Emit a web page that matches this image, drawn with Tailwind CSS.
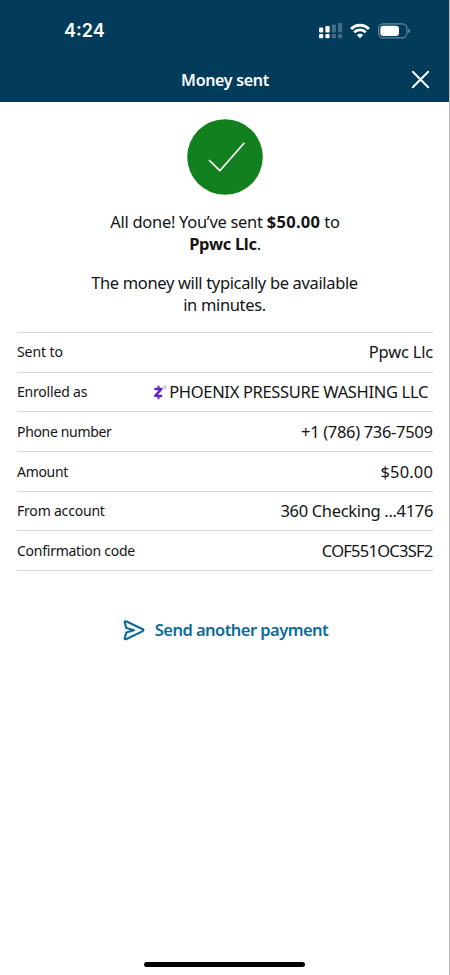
<!DOCTYPE html>
<html lang="en">
<head>
<meta charset="utf-8">
<title>Money sent</title>
<script src="https://cdn.jsdelivr.net/npm/@tailwindcss/browser@4"></script>
</head>
<body class="bg-white">
<div class="flex h-[975px] w-[450px] flex-col overflow-hidden border-r border-[#b4b7b9] bg-white font-['Noto_Sans',sans-serif] text-[#141414]">
  <header class="-mr-px h-[102px] shrink-0 bg-[#033c5a] text-white">
    <div class="flex h-[60px] items-center justify-between pt-[1px] pr-[39px] pl-[64px]">
      <span class="font-['Inter',sans-serif] text-[18px] font-semibold">4:24</span>
      <div class="flex items-center">
        <svg class="h-[16px] w-[24px]" viewBox="0 0 24 16" fill="#fff">
          <rect x="0" y="4.5" width="4.2" height="5" rx="1"/><rect x="0" y="11" width="4.2" height="4.2" rx="1"/>
          <rect x="6.4" y="3" width="4.2" height="6.5" rx="1"/><rect x="6.4" y="11" width="4.2" height="4.2" rx="1"/>
          <g opacity=".25"><rect x="12.8" y="1.5" width="4.2" height="8" rx="1"/><rect x="12.8" y="11" width="4.2" height="4.2" rx="1"/>
          <rect x="19" y="0" width="4.2" height="9.5" rx="1"/><rect x="19" y="11" width="4.2" height="4.2" rx="1"/></g>
        </svg>
        <svg class="ml-[7px] h-[16px] w-[20px]" viewBox="0 0 20 16" fill="none" stroke="#fff" stroke-width="2.9">
          <path d="M1 6C6 .9 14 .9 19 6"/><path d="M4.2 9.3c3.3-3.2 8.3-3.2 11.6 0"/>
          <path d="M10 15.2 6.8 12c1.8-1.6 4.6-1.6 6.4 0Z" fill="#fff" stroke="none"/>
        </svg>
        <svg class="ml-[8px] h-[16px] w-[33px]" viewBox="0 0 33 16">
          <rect x=".6" y=".9" width="28.3" height="14" rx="4.6" fill="none" stroke="#fff" stroke-opacity=".4" stroke-width="1.1"/>
          <rect x="2.3" y="2.7" width="18.7" height="10.4" rx="3" fill="#fff"/>
          <path d="M30.4 5.6c2.2.6 2.2 4 0 4.6Z" fill="#fff" fill-opacity=".45"/>
        </svg>
      </div>
    </div>
    <div class="grid h-[40px] grid-cols-[1fr_auto_1fr] items-center">
      <h1 class="col-start-2 text-[16px] font-semibold tracking-[-0.3px]">Money sent</h1>
      <svg class="mt-[-2px] mr-[20px] h-[19px] w-[19px] justify-self-end" viewBox="0 0 19 19" fill="none" stroke="#fff" stroke-width="2" stroke-linecap="round"><path d="m1.8 1.8 15.4 15.4M17.2 1.8 1.8 17.2"/></svg>
    </div>
  </header>
  <main class="flex flex-col items-center">
    <svg class="mt-[17px] h-[76px] w-[76px]" viewBox="0 0 76 76"><circle cx="38" cy="38" r="37.8" fill="#138020"/><path d="m22.5 41.5 10.3 10.2L57 24.3" fill="none" stroke="#fff" stroke-width="1.7" stroke-linecap="round" stroke-linejoin="round"/></svg>
    <p class="mt-[16px] ml-px text-center text-[16.5px] leading-[21.5px] tracking-[-0.3px] whitespace-nowrap">All done! You’ve sent <b class="tracking-[0.3px]">$50.00</b> to<br><b>Ppwc Llc</b>.</p>
    <p class="mt-[18px] text-center text-[16.5px] leading-[21.5px] tracking-[-0.35px] whitespace-nowrap">The money will typically be available<br>in minutes.</p>
    <dl class="mt-[17px] w-full pr-[16px] pl-[17px] text-[16.5px] tracking-[-0.33px] whitespace-nowrap">
      <div class="flex h-[39.7px] items-center justify-between border-t border-[#d6d6d6]"><dt class="pb-[1px] text-[14px] tracking-[-0.1px]">Sent to</dt><dd class="tracking-[-0.2px]">Ppwc Llc</dd></div>
      <div class="flex h-[39.7px] items-center justify-between border-t border-[#d6d6d6]"><dt class="pb-[1px] text-[14px] tracking-[-0.2px]">Enrolled as</dt>
        <dd class="flex items-center pr-[5px]">
          <svg class="mr-[2px] h-[15px] w-[14px]" viewBox="0 0 14 15" fill="none" stroke="#6222c0"><path d="M1.4 4h7L2.2 10.9h7" stroke-width="2.4" stroke-linejoin="round"/><path d="M5.5.8v2.8M5.5 11.3v2.9" stroke-width="2"/><circle cx="11.8" cy="2.6" r="1.4" stroke="#b99be0" stroke-width=".9"/></svg>
          <span>PHOENIX PRESSURE WASHING LLC</span>
        </dd></div>
      <div class="flex h-[39.7px] items-center justify-between border-t border-[#d6d6d6]"><dt class="text-[14px] tracking-[-0.33px]">Phone number</dt><dd class="pt-[1px] pr-[0.5px]">+1 (786) 736-7509</dd></div>
      <div class="flex h-[39.7px] items-center justify-between border-t border-[#d6d6d6]"><dt class="text-[14px] tracking-[-0.3px]">Amount</dt><dd class="pt-[1px] tracking-[0.15px]">$50.00</dd></div>
      <div class="flex h-[39.7px] items-center justify-between border-t border-[#d6d6d6]"><dt class="pb-[1px] text-[14px] tracking-[-0.2px]">From account</dt><dd>360 Checking ...4176</dd></div>
      <div class="flex h-[40.7px] items-center justify-between border-y border-[#d6d6d6]"><dt class="text-[14px] tracking-[-0.25px]">Confirmation code</dt><dd class="pt-[1px] pr-[0.5px] tracking-[-0.75px]">COF551OC3SF2</dd></div>
    </dl>
    <a class="mt-[47px] ml-[2px] flex items-center text-[16.5px] font-semibold tracking-[-0.55px] text-[#0d6b99]">
      <svg class="mr-[10px] h-[21px] w-[22px]" viewBox="0 0 22 21" fill="none" stroke="#0d6b99" stroke-width="2.1" stroke-linejoin="round" stroke-linecap="round"><path d="M1.7 2.4C1.5 1.5 2.2 1 3 1.3L19.8 9.3c.8.4.8 1.4 0 1.8L3 19.2c-.8.3-1.5-.2-1.3-1.1L3.3 12.6 11 10.3 3.3 8.1Z"/></svg>
      <span>Send another payment</span>
    </a>
  </main>
  <div class="mt-auto mb-[8px] h-[5.5px] w-[161px] shrink-0 self-center rounded-full bg-black"></div>
</div>
</body>
</html>
